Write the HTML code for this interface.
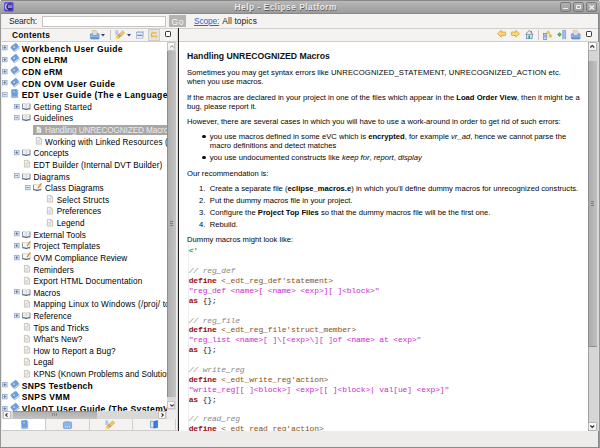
<!DOCTYPE html><html><head><meta charset="utf-8"><style>
*{margin:0;padding:0;box-sizing:border-box}
html,body{width:600px;height:448px;overflow:hidden;background:#edeceb}
body{position:relative;font-family:"Liberation Sans",sans-serif;color:#1c1c1c}
.a{position:absolute}
.t{position:absolute;white-space:nowrap;line-height:1}
svg{position:absolute;overflow:visible}
</style></head><body><div class="a" style="left:0;top:0;width:600px;height:14px;background:linear-gradient(#bababa,#b0b0b0 25%,#9c9c9c);border-top:1px solid #8a8a8a;border-bottom:1px solid #888"></div>
<div class="a" style="left:0;top:0;width:1.3px;height:1.3px;background:#fff"></div>
<div class="a" style="left:598.7px;top:0;width:1.3px;height:1.3px;background:#fff"></div>
<svg style="left:4px;top:2px" width="9.5" height="9.5" viewBox="0 0 10 10"><defs><linearGradient id="eg" x1="0" y1="0" x2="1" y2="1"><stop offset="0" stop-color="#6e5ee6"/><stop offset="1" stop-color="#4636b4"/></linearGradient></defs><rect x="0" y="0" width="10" height="10" rx="1.6" fill="url(#eg)"/><circle cx="5.4" cy="5" r="3.5" fill="#2c2a80"/><path d="M4.6 1.5A3.5 3.5 0 0 0 4.6 8.5A4.2 3.9 0 0 1 4.6 1.5Z" fill="#ecd4ec"/><path d="M4.2 3.4h4.4M4 4.6h4.9M4.2 5.8h4.5" stroke="#b4bcf0" stroke-width="0.75"/></svg>
<div class="t" style="left:234.6px;top:3.1px;font-size:8.3px;font-weight:bold;color:#ececec;letter-spacing:0.523px;text-shadow:0.4px 0.5px 0.6px #5a5a5a">Help - Eclipse Platform</div>
<div class="a" style="left:560.3px;top:2px;width:10.5px;height:10px;border:1px solid #7a7a7a;border-radius:2px;background:linear-gradient(#b0b0b0,#9c9c9c)"></div>
<div class="a" style="left:573px;top:2px;width:10.5px;height:10px;border:1px solid #7a7a7a;border-radius:2px;background:linear-gradient(#b0b0b0,#9c9c9c)"></div>
<div class="a" style="left:586.1px;top:2px;width:10.5px;height:10px;border:1px solid #7a7a7a;border-radius:2px;background:linear-gradient(#b0b0b0,#9c9c9c)"></div>
<div class="a" style="left:563px;top:7.6px;width:5.2px;height:1.4px;background:#f0f0f0"></div>
<div class="a" style="left:575.8px;top:4.8px;width:5.2px;height:4.2px;border:0.9px solid #f0f0f0;border-top-width:1.4px;border-radius:0.8px"></div>
<svg style="left:588.6px;top:4.5px" width="5.5" height="5" viewBox="0 0 5.5 5"><path d="M0.5 0.5L5 4.5M5 0.5L0.5 4.5" stroke="#f4f4f4" stroke-width="1.3"/></svg>
<div class="a" style="left:0;top:13px;width:1.3px;height:435px;background:linear-gradient(90deg,#a4a4a4,#8a8a8a)"></div>
<div class="a" style="left:598.3px;top:13px;width:1.7px;height:435px;background:linear-gradient(90deg,#8a8a8a 60%,#a8a8a8)"></div>
<div class="a" style="left:0;top:446.8px;width:600px;height:1.2px;background:#8a8a8a"></div>
<div class="a" style="left:1.5px;top:14px;width:596.5px;height:14px;background:#f4f3f2"></div>
<div class="t" style="left:9px;top:16.5px;font-size:8.4px;color:#222;letter-spacing:-0.141px">Search:</div>
<div class="a" style="left:42px;top:15.5px;width:123.5px;height:11px;background:#fff;border:1px solid #c6c4c2"></div>
<div class="a" style="left:169px;top:15px;width:16.5px;height:11.5px;background:#b5b3b1"></div>
<div class="t" style="left:171.6px;top:17.6px;font-size:8.6px;color:#f6f6f6;letter-spacing:0.45px">Go</div>
<div class="t" style="left:194px;top:16.5px;font-size:8.4px;color:#2f63d6;text-decoration:underline;letter-spacing:-0.156px">Scope:</div>
<div class="t" style="left:222.3px;top:16.5px;font-size:8.4px;color:#1a1a1a;letter-spacing:0.113px">All topics</div>
<div class="a" style="left:1.5px;top:28px;width:596.5px;height:1px;background:#d2d0ce"></div>
<div class="a" style="left:1.5px;top:29px;width:175px;height:12px;background:#f4f3f2"></div>
<div class="t" style="left:12px;top:31.3px;font-size:8.3px;font-weight:bold;color:#0a0a0a;letter-spacing:0.263px">Contents</div>
<div class="a" style="left:1.5px;top:41px;width:175px;height:1px;background:#d0cecc"></div>
<svg style="left:90px;top:30px" width="9.5" height="9.5" viewBox="0 0 9.5 9.5"><path d="M2.3 5.5V0.6H6L7.2 1.8V5.5z" fill="#d4e0f2" stroke="#d2b060" stroke-width="0.6"/><path d="M0.4 3.8H2.3V5.6H7.2V3.8H9.1V8.2Q9.1 9.1 8.2 9.1H1.3Q0.4 9.1 0.4 8.2z" fill="#94b8e6" stroke="#5a88cc" stroke-width="0.6"/><rect x="0.8" y="7.4" width="7.9" height="1.3" fill="#5a84c4"/></svg>
<svg style="left:101px;top:33.8px" width="4" height="3" viewBox="0 0 4 3"><path d="M0 0h4l-2 2.6z" fill="#2a3a7a"/></svg>
<div class="a" style="left:110.3px;top:30px;width:1px;height:9.5px;background:#c8c6c4"></div>
<svg style="left:115.2px;top:30px" width="10.0" height="9.5" viewBox="0 0 10 9.5"><rect x="0.3" y="0.3" width="3" height="4.6" fill="#b4c6e6"/><g transform="rotate(-42 5.2 5)"><rect x="1" y="3.6" width="9" height="2.9" rx="0.6" fill="#f2c454" stroke="#dc9a28" stroke-width="0.5"/><rect x="3.2" y="3.6" width="2" height="2.9" fill="#a8a0b8"/><rect x="7.2" y="4.2" width="1.6" height="1.6" fill="#c8d0a0"/></g><circle cx="1.4" cy="8.2" r="1.2" fill="#f8e860" opacity="0.9"/></svg>
<svg style="left:126.8px;top:33.8px" width="4" height="3" viewBox="0 0 4 3"><path d="M0 0h4l-2 2.6z" fill="#2a3a7a"/></svg>
<svg style="left:136px;top:31px" width="8" height="7.5" viewBox="0 0 8 7.5"><rect x="1.5" y="0.3" width="6.2" height="5.5" fill="#dfe8f4" stroke="#9ab0cc" stroke-width="0.5"/><rect x="0.3" y="1.5" width="6.5" height="5.7" fill="#e8f0fa" stroke="#8aa4c4" stroke-width="0.6"/><rect x="1.3" y="3.8" width="4.6" height="1" fill="#3a70b8"/></svg>
<div class="a" style="left:148.3px;top:29px;width:11.3px;height:11.6px;background:#e4e2e0;border:1px solid #cfcdcb"></div>
<svg style="left:149px;top:29.5px" width="10" height="10" viewBox="0 0 10 10"><g fill="none" stroke="#e6b23a" stroke-width="1.3" stroke-linecap="round"><path d="M2.6 1.6V6.4H7.2"/><path d="M2.6 2.9H7"/></g><path d="M2.6 0.4L3.9 1.9 2.6 3.3 1.3 1.9z" fill="#f4cc58"/><path d="M7.3 5.1L8.7 6.5 7.3 7.9 5.9 6.5z" fill="#f0c040"/><circle cx="2.4" cy="1.9" r="0.6" fill="#fff4c0"/></svg>
<div class="a" style="left:165px;top:31.2px;width:5.6px;height:6px;border:0.8px solid #3a3a3a;border-top-width:1.5px;border-radius:1.2px;background:#fafafa"></div>
<div class="a" style="left:176.5px;top:28px;width:1.5px;height:403px;background:#dcdad8"></div>
<div class="a" style="left:178px;top:28px;width:1px;height:403px;background:#1e1e1e"></div>
<div class="a" style="left:2px;top:42px;width:164.8px;height:368.5px;background:#fff;overflow:hidden" >
<svg style="left:0.00px;top:3.40px" width="5.5" height="5.5" viewBox="0 0 5.5 5.5"><rect x="0.4" y="0.4" width="4.7" height="4.4" fill="#e4eef8" stroke="#9aaecb" stroke-width="0.9"/><path d="M1.3 2.6H4.2" stroke="#6f86a6" stroke-width="0.9"/><path d="M2.75 1.2V4.0" stroke="#4f6890" stroke-width="0.9"/></svg>
<svg style="left:7.8999999999999995px;top:0.8px" width="10" height="9" viewBox="0 0 10 9"><g transform="rotate(-38 5 4.5)"><rect x="1.6" y="1.4" width="7" height="5.6" rx="1" fill="#6a9ee0" stroke="#5a8ad0" stroke-width="0.4"/><rect x="1.8" y="6.6" width="6.8" height="1.1" fill="#dde4ec"/><rect x="1.6" y="7.5" width="7" height="0.5" fill="#6a90c8"/><circle cx="4.6" cy="3.6" r="0.8" fill="#f4e8c0"/></g></svg>
<div class="t" style="left:19.80px;top:3px;font-size:8.5px;font-weight:bold;color:#000;letter-spacing:0.364px">Workbench User Guide</div>
<svg style="left:0.00px;top:15.02px" width="5.5" height="5.5" viewBox="0 0 5.5 5.5"><rect x="0.4" y="0.4" width="4.7" height="4.4" fill="#e4eef8" stroke="#9aaecb" stroke-width="0.9"/><path d="M1.3 2.6H4.2" stroke="#6f86a6" stroke-width="0.9"/><path d="M2.75 1.2V4.0" stroke="#4f6890" stroke-width="0.9"/></svg>
<svg style="left:7.8999999999999995px;top:12.42px" width="10" height="9" viewBox="0 0 10 9"><g transform="rotate(-38 5 4.5)"><rect x="1.6" y="1.4" width="7" height="5.6" rx="1" fill="#6a9ee0" stroke="#5a8ad0" stroke-width="0.4"/><rect x="1.8" y="6.6" width="6.8" height="1.1" fill="#dde4ec"/><rect x="1.6" y="7.5" width="7" height="0.5" fill="#6a90c8"/><circle cx="4.6" cy="3.6" r="0.8" fill="#f4e8c0"/></g></svg>
<div class="t" style="left:19.80px;top:14px;font-size:8.5px;font-weight:bold;color:#000;letter-spacing:0.247px">CDN eLRM</div>
<svg style="left:0.00px;top:26.64px" width="5.5" height="5.5" viewBox="0 0 5.5 5.5"><rect x="0.4" y="0.4" width="4.7" height="4.4" fill="#e4eef8" stroke="#9aaecb" stroke-width="0.9"/><path d="M1.3 2.6H4.2" stroke="#6f86a6" stroke-width="0.9"/><path d="M2.75 1.2V4.0" stroke="#4f6890" stroke-width="0.9"/></svg>
<svg style="left:7.8999999999999995px;top:24.04px" width="10" height="9" viewBox="0 0 10 9"><g transform="rotate(-38 5 4.5)"><rect x="1.6" y="1.4" width="7" height="5.6" rx="1" fill="#6a9ee0" stroke="#5a8ad0" stroke-width="0.4"/><rect x="1.8" y="6.6" width="6.8" height="1.1" fill="#dde4ec"/><rect x="1.6" y="7.5" width="7" height="0.5" fill="#6a90c8"/><circle cx="4.6" cy="3.6" r="0.8" fill="#f4e8c0"/></g></svg>
<div class="t" style="left:19.80px;top:26px;font-size:8.5px;font-weight:bold;color:#000;letter-spacing:0.322px">CDN eRM</div>
<svg style="left:0.00px;top:38.26px" width="5.5" height="5.5" viewBox="0 0 5.5 5.5"><rect x="0.4" y="0.4" width="4.7" height="4.4" fill="#e4eef8" stroke="#9aaecb" stroke-width="0.9"/><path d="M1.3 2.6H4.2" stroke="#6f86a6" stroke-width="0.9"/><path d="M2.75 1.2V4.0" stroke="#4f6890" stroke-width="0.9"/></svg>
<svg style="left:7.8999999999999995px;top:35.66px" width="10" height="9" viewBox="0 0 10 9"><g transform="rotate(-38 5 4.5)"><rect x="1.6" y="1.4" width="7" height="5.6" rx="1" fill="#6a9ee0" stroke="#5a8ad0" stroke-width="0.4"/><rect x="1.8" y="6.6" width="6.8" height="1.1" fill="#dde4ec"/><rect x="1.6" y="7.5" width="7" height="0.5" fill="#6a90c8"/><circle cx="4.6" cy="3.6" r="0.8" fill="#f4e8c0"/></g></svg>
<div class="t" style="left:19.80px;top:38px;font-size:8.5px;font-weight:bold;color:#000;letter-spacing:0.307px">CDN OVM User Guide</div>
<svg style="left:0.00px;top:49.88px" width="5.5" height="5.5" viewBox="0 0 5.5 5.5"><rect x="0.4" y="0.4" width="4.7" height="4.4" fill="#e4eef8" stroke="#9aaecb" stroke-width="0.9"/><path d="M1.3 2.6H4.2" stroke="#6f86a6" stroke-width="0.9"/></svg>
<svg style="left:9.0px;top:47.48px" width="8" height="9" viewBox="0 0 8 9"><path d="M0.5 0.8L5.5 0.3 6.6 1.6 6.6 8.5 0.8 8.7z" fill="#6aa0e2" stroke="#4a78b8" stroke-width="0.4"/><path d="M5.5 0.3L6.6 1.6 6.6 8.5 7.2 8.2 7.2 1z" fill="#c8c0a0"/><rect x="1" y="7.6" width="5.6" height="1" fill="#c0c8d0"/><circle cx="3" cy="2.8" r="0.7" fill="#e8e0c0"/></svg>
<div class="t" style="left:19.80px;top:49px;font-size:8.5px;font-weight:bold;color:#000;letter-spacing:0.378px">EDT User Guide (The e Language Reference)</div>
<svg style="left:11.63px;top:61.50px" width="5.5" height="5.5" viewBox="0 0 5.5 5.5"><rect x="0.4" y="0.4" width="4.7" height="4.4" fill="#e4eef8" stroke="#9aaecb" stroke-width="0.9"/><path d="M1.3 2.6H4.2" stroke="#6f86a6" stroke-width="0.9"/><path d="M2.75 1.2V4.0" stroke="#4f6890" stroke-width="0.9"/></svg>
<svg style="left:19.63px;top:60.8px" width="8.5" height="7" viewBox="0 0 8.5 7"><path d="M0.4 0.6Q2.2 0.2 4.25 1.1Q6.3 0.2 8.1 0.6V5.8Q6.3 5.3 4.25 6.3Q2.2 5.3 0.4 5.8z" fill="#f4f6fa" stroke="#b8ac80" stroke-width="0.5"/><path d="M0.4 5.9Q2.2 5.4 4.25 6.5Q6.3 5.4 8.1 5.9" fill="none" stroke="#46587a" stroke-width="1.1"/><path d="M0.5 1V5.6M8 1V5.6" stroke="#6a7a90" stroke-width="0.7"/><path d="M4.25 1.2V6.2" stroke="#a0a8b8" stroke-width="0.5"/><path d="M1.5 2.2h1.8M1.5 3.4h1.8M5.2 2.2h1.8M5.2 3.4h1.8" stroke="#c8d4e8" stroke-width="0.5"/></svg>
<div class="t" style="left:31.43px;top:62px;font-size:8.2px;color:#000;letter-spacing:0.240px">Getting Started</div>
<svg style="left:11.63px;top:73.12px" width="5.5" height="5.5" viewBox="0 0 5.5 5.5"><rect x="0.4" y="0.4" width="4.7" height="4.4" fill="#e4eef8" stroke="#9aaecb" stroke-width="0.9"/><path d="M1.3 2.6H4.2" stroke="#6f86a6" stroke-width="0.9"/></svg>
<svg style="left:19.63px;top:72.42px" width="8.5" height="7" viewBox="0 0 8.5 7"><path d="M0.4 0.6Q2.2 0.2 4.25 1.1Q6.3 0.2 8.1 0.6V5.8Q6.3 5.3 4.25 6.3Q2.2 5.3 0.4 5.8z" fill="#f4f6fa" stroke="#b8ac80" stroke-width="0.5"/><path d="M0.4 5.9Q2.2 5.4 4.25 6.5Q6.3 5.4 8.1 5.9" fill="none" stroke="#46587a" stroke-width="1.1"/><path d="M0.5 1V5.6M8 1V5.6" stroke="#6a7a90" stroke-width="0.7"/><path d="M4.25 1.2V6.2" stroke="#a0a8b8" stroke-width="0.5"/><path d="M1.5 2.2h1.8M1.5 3.4h1.8M5.2 2.2h1.8M5.2 3.4h1.8" stroke="#c8d4e8" stroke-width="0.5"/></svg>
<div class="t" style="left:31.43px;top:73px;font-size:8.2px;color:#000;letter-spacing:0.120px">Guidelines</div>
<div class="a" style="left:31.46px;top:82.94px;width:140px;height:10px;background:#a9a7a5"></div>
<svg style="left:33.56px;top:83.53999999999999px" width="6" height="7.5" viewBox="0 0 6 7.5"><path d="M0.4 0.4H3.8L5.6 2.2V7.1H0.4z" fill="#f2f4f8" stroke="#b4a47c" stroke-width="0.6"/><path d="M3.8 0.4V2.2H5.6" fill="none" stroke="#b4a47c" stroke-width="0.5"/><path d="M1.4 3.5h2.8M1.4 4.7h2.8M1.4 5.9h2.2" stroke="#b8c4dc" stroke-width="0.6"/></svg>
<div class="t" style="left:43.06px;top:85px;font-size:8.2px;color:#ebebeb;letter-spacing:-0.107px">Handling UNRECOGNIZED Macros</div>
<svg style="left:33.56px;top:95.16px" width="6" height="7.5" viewBox="0 0 6 7.5"><path d="M0.4 0.4H3.8L5.6 2.2V7.1H0.4z" fill="#f2f4f8" stroke="#b4a47c" stroke-width="0.6"/><path d="M3.8 0.4V2.2H5.6" fill="none" stroke="#b4a47c" stroke-width="0.5"/><path d="M1.4 3.5h2.8M1.4 4.7h2.8M1.4 5.9h2.2" stroke="#b8c4dc" stroke-width="0.6"/></svg>
<div class="t" style="left:43.06px;top:97px;font-size:8.2px;color:#000;letter-spacing:0.105px">Working with Linked Resources (</div>
<svg style="left:11.63px;top:107.98px" width="5.5" height="5.5" viewBox="0 0 5.5 5.5"><rect x="0.4" y="0.4" width="4.7" height="4.4" fill="#e4eef8" stroke="#9aaecb" stroke-width="0.9"/><path d="M1.3 2.6H4.2" stroke="#6f86a6" stroke-width="0.9"/><path d="M2.75 1.2V4.0" stroke="#4f6890" stroke-width="0.9"/></svg>
<svg style="left:19.63px;top:107.28px" width="8.5" height="7" viewBox="0 0 8.5 7"><path d="M0.4 0.6Q2.2 0.2 4.25 1.1Q6.3 0.2 8.1 0.6V5.8Q6.3 5.3 4.25 6.3Q2.2 5.3 0.4 5.8z" fill="#f4f6fa" stroke="#b8ac80" stroke-width="0.5"/><path d="M0.4 5.9Q2.2 5.4 4.25 6.5Q6.3 5.4 8.1 5.9" fill="none" stroke="#46587a" stroke-width="1.1"/><path d="M0.5 1V5.6M8 1V5.6" stroke="#6a7a90" stroke-width="0.7"/><path d="M4.25 1.2V6.2" stroke="#a0a8b8" stroke-width="0.5"/><path d="M1.5 2.2h1.8M1.5 3.4h1.8M5.2 2.2h1.8M5.2 3.4h1.8" stroke="#c8d4e8" stroke-width="0.5"/></svg>
<div class="t" style="left:31.43px;top:108px;font-size:8.2px;color:#000;letter-spacing:0.086px">Concepts</div>
<svg style="left:21.93px;top:118.39999999999999px" width="6" height="7.5" viewBox="0 0 6 7.5"><path d="M0.4 0.4H3.8L5.6 2.2V7.1H0.4z" fill="#f2f4f8" stroke="#b4a47c" stroke-width="0.6"/><path d="M3.8 0.4V2.2H5.6" fill="none" stroke="#b4a47c" stroke-width="0.5"/><path d="M1.4 3.5h2.8M1.4 4.7h2.8M1.4 5.9h2.2" stroke="#b8c4dc" stroke-width="0.6"/></svg>
<div class="t" style="left:31.43px;top:120px;font-size:8.2px;color:#000;letter-spacing:0.106px">EDT Builder (Internal DVT Builder)</div>
<svg style="left:11.63px;top:131.22px" width="5.5" height="5.5" viewBox="0 0 5.5 5.5"><rect x="0.4" y="0.4" width="4.7" height="4.4" fill="#e4eef8" stroke="#9aaecb" stroke-width="0.9"/><path d="M1.3 2.6H4.2" stroke="#6f86a6" stroke-width="0.9"/></svg>
<svg style="left:19.63px;top:130.51999999999998px" width="8.5" height="7" viewBox="0 0 8.5 7"><path d="M0.4 0.6Q2.2 0.2 4.25 1.1Q6.3 0.2 8.1 0.6V5.8Q6.3 5.3 4.25 6.3Q2.2 5.3 0.4 5.8z" fill="#f4f6fa" stroke="#b8ac80" stroke-width="0.5"/><path d="M0.4 5.9Q2.2 5.4 4.25 6.5Q6.3 5.4 8.1 5.9" fill="none" stroke="#46587a" stroke-width="1.1"/><path d="M0.5 1V5.6M8 1V5.6" stroke="#6a7a90" stroke-width="0.7"/><path d="M4.25 1.2V6.2" stroke="#a0a8b8" stroke-width="0.5"/><path d="M1.5 2.2h1.8M1.5 3.4h1.8M5.2 2.2h1.8M5.2 3.4h1.8" stroke="#c8d4e8" stroke-width="0.5"/></svg>
<div class="t" style="left:31.43px;top:132px;font-size:8.2px;color:#000;letter-spacing:0.193px">Diagrams</div>
<svg style="left:23.26px;top:142.84px" width="5.5" height="5.5" viewBox="0 0 5.5 5.5"><rect x="0.4" y="0.4" width="4.7" height="4.4" fill="#e4eef8" stroke="#9aaecb" stroke-width="0.9"/><path d="M1.3 2.6H4.2" stroke="#6f86a6" stroke-width="0.9"/></svg>
<svg style="left:31.26px;top:140.64px" width="9" height="8" viewBox="0 0 9 8"><path d="M0.4 1.6Q2.2 1.2 4.25 2.1Q6.3 1.2 8.1 1.6V6.8Q6.3 6.3 4.25 7.3Q2.2 6.3 0.4 6.8z" fill="#f4f6fa" stroke="#b8ac80" stroke-width="0.5"/><path d="M0.4 6.9Q2.2 6.4 4.25 7.5Q6.3 6.4 8.1 6.9" fill="none" stroke="#46587a" stroke-width="1.1"/><path d="M0.5 2V6.6" stroke="#6a7a90" stroke-width="0.7"/><path d="M5 5.2L8.4 0.4" stroke="#e08a30" stroke-width="1.3"/></svg>
<div class="t" style="left:43.06px;top:143px;font-size:8.2px;color:#000;letter-spacing:0.068px">Class Diagrams</div>
<svg style="left:45.19px;top:153.26px" width="6" height="7.5" viewBox="0 0 6 7.5"><path d="M0.4 0.4H3.8L5.6 2.2V7.1H0.4z" fill="#f2f4f8" stroke="#b4a47c" stroke-width="0.6"/><path d="M3.8 0.4V2.2H5.6" fill="none" stroke="#b4a47c" stroke-width="0.5"/><path d="M1.4 3.5h2.8M1.4 4.7h2.8M1.4 5.9h2.2" stroke="#b8c4dc" stroke-width="0.6"/></svg>
<div class="t" style="left:54.69px;top:155px;font-size:8.2px;color:#000;letter-spacing:0.148px">Select Structs</div>
<svg style="left:45.19px;top:164.87999999999997px" width="6" height="7.5" viewBox="0 0 6 7.5"><path d="M0.4 0.4H3.8L5.6 2.2V7.1H0.4z" fill="#f2f4f8" stroke="#b4a47c" stroke-width="0.6"/><path d="M3.8 0.4V2.2H5.6" fill="none" stroke="#b4a47c" stroke-width="0.5"/><path d="M1.4 3.5h2.8M1.4 4.7h2.8M1.4 5.9h2.2" stroke="#b8c4dc" stroke-width="0.6"/></svg>
<div class="t" style="left:54.69px;top:166px;font-size:8.2px;color:#000;letter-spacing:0.030px">Preferences</div>
<svg style="left:45.19px;top:176.49999999999997px" width="6" height="7.5" viewBox="0 0 6 7.5"><path d="M0.4 0.4H3.8L5.6 2.2V7.1H0.4z" fill="#f2f4f8" stroke="#b4a47c" stroke-width="0.6"/><path d="M3.8 0.4V2.2H5.6" fill="none" stroke="#b4a47c" stroke-width="0.5"/><path d="M1.4 3.5h2.8M1.4 4.7h2.8M1.4 5.9h2.2" stroke="#b8c4dc" stroke-width="0.6"/></svg>
<div class="t" style="left:54.69px;top:178px;font-size:8.2px;color:#000;letter-spacing:0.087px">Legend</div>
<svg style="left:11.63px;top:189.32px" width="5.5" height="5.5" viewBox="0 0 5.5 5.5"><rect x="0.4" y="0.4" width="4.7" height="4.4" fill="#e4eef8" stroke="#9aaecb" stroke-width="0.9"/><path d="M1.3 2.6H4.2" stroke="#6f86a6" stroke-width="0.9"/><path d="M2.75 1.2V4.0" stroke="#4f6890" stroke-width="0.9"/></svg>
<svg style="left:19.63px;top:188.61999999999998px" width="8.5" height="7" viewBox="0 0 8.5 7"><path d="M0.4 0.6Q2.2 0.2 4.25 1.1Q6.3 0.2 8.1 0.6V5.8Q6.3 5.3 4.25 6.3Q2.2 5.3 0.4 5.8z" fill="#f4f6fa" stroke="#b8ac80" stroke-width="0.5"/><path d="M0.4 5.9Q2.2 5.4 4.25 6.5Q6.3 5.4 8.1 5.9" fill="none" stroke="#46587a" stroke-width="1.1"/><path d="M0.5 1V5.6M8 1V5.6" stroke="#6a7a90" stroke-width="0.7"/><path d="M4.25 1.2V6.2" stroke="#a0a8b8" stroke-width="0.5"/><path d="M1.5 2.2h1.8M1.5 3.4h1.8M5.2 2.2h1.8M5.2 3.4h1.8" stroke="#c8d4e8" stroke-width="0.5"/></svg>
<div class="t" style="left:31.43px;top:190px;font-size:8.2px;color:#000;letter-spacing:0.085px">External Tools</div>
<svg style="left:11.63px;top:200.94px" width="5.5" height="5.5" viewBox="0 0 5.5 5.5"><rect x="0.4" y="0.4" width="4.7" height="4.4" fill="#e4eef8" stroke="#9aaecb" stroke-width="0.9"/><path d="M1.3 2.6H4.2" stroke="#6f86a6" stroke-width="0.9"/><path d="M2.75 1.2V4.0" stroke="#4f6890" stroke-width="0.9"/></svg>
<svg style="left:19.63px;top:198.73999999999998px" width="9" height="8" viewBox="0 0 9 8"><path d="M0.4 1.6Q2.2 1.2 4.25 2.1Q6.3 1.2 8.1 1.6V6.8Q6.3 6.3 4.25 7.3Q2.2 6.3 0.4 6.8z" fill="#f4f6fa" stroke="#b8ac80" stroke-width="0.5"/><path d="M0.4 6.9Q2.2 6.4 4.25 7.5Q6.3 6.4 8.1 6.9" fill="none" stroke="#46587a" stroke-width="1.1"/><path d="M0.5 2V6.6" stroke="#6a7a90" stroke-width="0.7"/><path d="M5 5.2L8.4 0.4" stroke="#e08a30" stroke-width="1.3"/></svg>
<div class="t" style="left:31.43px;top:201px;font-size:8.2px;color:#000;letter-spacing:0.110px">Project Templates</div>
<svg style="left:11.63px;top:212.56px" width="5.5" height="5.5" viewBox="0 0 5.5 5.5"><rect x="0.4" y="0.4" width="4.7" height="4.4" fill="#e4eef8" stroke="#9aaecb" stroke-width="0.9"/><path d="M1.3 2.6H4.2" stroke="#6f86a6" stroke-width="0.9"/><path d="M2.75 1.2V4.0" stroke="#4f6890" stroke-width="0.9"/></svg>
<svg style="left:19.63px;top:210.35999999999999px" width="9" height="8" viewBox="0 0 9 8"><path d="M0.4 1.6Q2.2 1.2 4.25 2.1Q6.3 1.2 8.1 1.6V6.8Q6.3 6.3 4.25 7.3Q2.2 6.3 0.4 6.8z" fill="#f4f6fa" stroke="#b8ac80" stroke-width="0.5"/><path d="M0.4 6.9Q2.2 6.4 4.25 7.5Q6.3 6.4 8.1 6.9" fill="none" stroke="#46587a" stroke-width="1.1"/><path d="M0.5 2V6.6" stroke="#6a7a90" stroke-width="0.7"/><path d="M5 5.2L8.4 0.4" stroke="#e08a30" stroke-width="1.3"/></svg>
<div class="t" style="left:31.43px;top:213px;font-size:8.2px;color:#000;letter-spacing:0.024px">OVM Compliance Review</div>
<svg style="left:21.93px;top:222.97999999999996px" width="6" height="7.5" viewBox="0 0 6 7.5"><path d="M0.4 0.4H3.8L5.6 2.2V7.1H0.4z" fill="#f2f4f8" stroke="#b4a47c" stroke-width="0.6"/><path d="M3.8 0.4V2.2H5.6" fill="none" stroke="#b4a47c" stroke-width="0.5"/><path d="M1.4 3.5h2.8M1.4 4.7h2.8M1.4 5.9h2.2" stroke="#b8c4dc" stroke-width="0.6"/></svg>
<div class="t" style="left:31.43px;top:225px;font-size:8.2px;color:#000;letter-spacing:0.089px">Reminders</div>
<svg style="left:21.93px;top:234.59999999999997px" width="6" height="7.5" viewBox="0 0 6 7.5"><path d="M0.4 0.4H3.8L5.6 2.2V7.1H0.4z" fill="#f2f4f8" stroke="#b4a47c" stroke-width="0.6"/><path d="M3.8 0.4V2.2H5.6" fill="none" stroke="#b4a47c" stroke-width="0.5"/><path d="M1.4 3.5h2.8M1.4 4.7h2.8M1.4 5.9h2.2" stroke="#b8c4dc" stroke-width="0.6"/></svg>
<div class="t" style="left:31.43px;top:236px;font-size:8.2px;color:#000;letter-spacing:0.149px">Export HTML Documentation</div>
<svg style="left:11.63px;top:247.42px" width="5.5" height="5.5" viewBox="0 0 5.5 5.5"><rect x="0.4" y="0.4" width="4.7" height="4.4" fill="#e4eef8" stroke="#9aaecb" stroke-width="0.9"/><path d="M1.3 2.6H4.2" stroke="#6f86a6" stroke-width="0.9"/><path d="M2.75 1.2V4.0" stroke="#4f6890" stroke-width="0.9"/></svg>
<svg style="left:19.63px;top:246.71999999999997px" width="8.5" height="7" viewBox="0 0 8.5 7"><path d="M0.4 0.6Q2.2 0.2 4.25 1.1Q6.3 0.2 8.1 0.6V5.8Q6.3 5.3 4.25 6.3Q2.2 5.3 0.4 5.8z" fill="#f4f6fa" stroke="#b8ac80" stroke-width="0.5"/><path d="M0.4 5.9Q2.2 5.4 4.25 6.5Q6.3 5.4 8.1 5.9" fill="none" stroke="#46587a" stroke-width="1.1"/><path d="M0.5 1V5.6M8 1V5.6" stroke="#6a7a90" stroke-width="0.7"/><path d="M4.25 1.2V6.2" stroke="#a0a8b8" stroke-width="0.5"/><path d="M1.5 2.2h1.8M1.5 3.4h1.8M5.2 2.2h1.8M5.2 3.4h1.8" stroke="#c8d4e8" stroke-width="0.5"/></svg>
<div class="t" style="left:31.43px;top:248px;font-size:8.2px;color:#000;letter-spacing:-0.007px">Macros</div>
<svg style="left:21.93px;top:257.84px" width="6" height="7.5" viewBox="0 0 6 7.5"><path d="M0.4 0.4H3.8L5.6 2.2V7.1H0.4z" fill="#f2f4f8" stroke="#b4a47c" stroke-width="0.6"/><path d="M3.8 0.4V2.2H5.6" fill="none" stroke="#b4a47c" stroke-width="0.5"/><path d="M1.4 3.5h2.8M1.4 4.7h2.8M1.4 5.9h2.2" stroke="#b8c4dc" stroke-width="0.6"/></svg>
<div class="t" style="left:31.43px;top:259px;font-size:8.2px;color:#000;letter-spacing:0.179px">Mapping Linux to Windows (/proj/ to</div>
<svg style="left:11.63px;top:270.66px" width="5.5" height="5.5" viewBox="0 0 5.5 5.5"><rect x="0.4" y="0.4" width="4.7" height="4.4" fill="#e4eef8" stroke="#9aaecb" stroke-width="0.9"/><path d="M1.3 2.6H4.2" stroke="#6f86a6" stroke-width="0.9"/><path d="M2.75 1.2V4.0" stroke="#4f6890" stroke-width="0.9"/></svg>
<svg style="left:19.63px;top:269.96px" width="8.5" height="7" viewBox="0 0 8.5 7"><path d="M0.4 0.6Q2.2 0.2 4.25 1.1Q6.3 0.2 8.1 0.6V5.8Q6.3 5.3 4.25 6.3Q2.2 5.3 0.4 5.8z" fill="#f4f6fa" stroke="#b8ac80" stroke-width="0.5"/><path d="M0.4 5.9Q2.2 5.4 4.25 6.5Q6.3 5.4 8.1 5.9" fill="none" stroke="#46587a" stroke-width="1.1"/><path d="M0.5 1V5.6M8 1V5.6" stroke="#6a7a90" stroke-width="0.7"/><path d="M4.25 1.2V6.2" stroke="#a0a8b8" stroke-width="0.5"/><path d="M1.5 2.2h1.8M1.5 3.4h1.8M5.2 2.2h1.8M5.2 3.4h1.8" stroke="#c8d4e8" stroke-width="0.5"/></svg>
<div class="t" style="left:31.43px;top:271px;font-size:8.2px;color:#000;letter-spacing:0.035px">Reference</div>
<svg style="left:21.93px;top:281.08px" width="6" height="7.5" viewBox="0 0 6 7.5"><path d="M0.4 0.4H3.8L5.6 2.2V7.1H0.4z" fill="#f2f4f8" stroke="#b4a47c" stroke-width="0.6"/><path d="M3.8 0.4V2.2H5.6" fill="none" stroke="#b4a47c" stroke-width="0.5"/><path d="M1.4 3.5h2.8M1.4 4.7h2.8M1.4 5.9h2.2" stroke="#b8c4dc" stroke-width="0.6"/></svg>
<div class="t" style="left:31.43px;top:283px;font-size:8.2px;color:#000;letter-spacing:0.048px">Tips and Tricks</div>
<svg style="left:21.93px;top:292.7px" width="6" height="7.5" viewBox="0 0 6 7.5"><path d="M0.4 0.4H3.8L5.6 2.2V7.1H0.4z" fill="#f2f4f8" stroke="#b4a47c" stroke-width="0.6"/><path d="M3.8 0.4V2.2H5.6" fill="none" stroke="#b4a47c" stroke-width="0.5"/><path d="M1.4 3.5h2.8M1.4 4.7h2.8M1.4 5.9h2.2" stroke="#b8c4dc" stroke-width="0.6"/></svg>
<div class="t" style="left:31.43px;top:294px;font-size:8.2px;color:#000;letter-spacing:0.080px">What&#x27;s New?</div>
<svg style="left:21.93px;top:304.32px" width="6" height="7.5" viewBox="0 0 6 7.5"><path d="M0.4 0.4H3.8L5.6 2.2V7.1H0.4z" fill="#f2f4f8" stroke="#b4a47c" stroke-width="0.6"/><path d="M3.8 0.4V2.2H5.6" fill="none" stroke="#b4a47c" stroke-width="0.5"/><path d="M1.4 3.5h2.8M1.4 4.7h2.8M1.4 5.9h2.2" stroke="#b8c4dc" stroke-width="0.6"/></svg>
<div class="t" style="left:31.43px;top:306px;font-size:8.2px;color:#000;letter-spacing:0.084px">How to Report a Bug?</div>
<svg style="left:21.93px;top:315.93999999999994px" width="6" height="7.5" viewBox="0 0 6 7.5"><path d="M0.4 0.4H3.8L5.6 2.2V7.1H0.4z" fill="#f2f4f8" stroke="#b4a47c" stroke-width="0.6"/><path d="M3.8 0.4V2.2H5.6" fill="none" stroke="#b4a47c" stroke-width="0.5"/><path d="M1.4 3.5h2.8M1.4 4.7h2.8M1.4 5.9h2.2" stroke="#b8c4dc" stroke-width="0.6"/></svg>
<div class="t" style="left:31.43px;top:317px;font-size:8.2px;color:#000;letter-spacing:0.055px">Legal</div>
<svg style="left:21.93px;top:327.55999999999995px" width="6" height="7.5" viewBox="0 0 6 7.5"><path d="M0.4 0.4H3.8L5.6 2.2V7.1H0.4z" fill="#f2f4f8" stroke="#b4a47c" stroke-width="0.6"/><path d="M3.8 0.4V2.2H5.6" fill="none" stroke="#b4a47c" stroke-width="0.5"/><path d="M1.4 3.5h2.8M1.4 4.7h2.8M1.4 5.9h2.2" stroke="#b8c4dc" stroke-width="0.6"/></svg>
<div class="t" style="left:31.43px;top:329px;font-size:8.2px;color:#000;letter-spacing:0.023px">KPNS (Known Problems and Solutions)</div>
<svg style="left:0.00px;top:340.38px" width="5.5" height="5.5" viewBox="0 0 5.5 5.5"><rect x="0.4" y="0.4" width="4.7" height="4.4" fill="#e4eef8" stroke="#9aaecb" stroke-width="0.9"/><path d="M1.3 2.6H4.2" stroke="#6f86a6" stroke-width="0.9"/><path d="M2.75 1.2V4.0" stroke="#4f6890" stroke-width="0.9"/></svg>
<svg style="left:7.8999999999999995px;top:337.78px" width="10" height="9" viewBox="0 0 10 9"><g transform="rotate(-38 5 4.5)"><rect x="1.6" y="1.4" width="7" height="5.6" rx="1" fill="#6a9ee0" stroke="#5a8ad0" stroke-width="0.4"/><rect x="1.8" y="6.6" width="6.8" height="1.1" fill="#dde4ec"/><rect x="1.6" y="7.5" width="7" height="0.5" fill="#6a90c8"/><circle cx="4.6" cy="3.6" r="0.8" fill="#f4e8c0"/></g></svg>
<div class="t" style="left:19.80px;top:340px;font-size:8.5px;font-weight:bold;color:#000;letter-spacing:0.279px">SNPS Testbench</div>
<svg style="left:0.00px;top:352.00px" width="5.5" height="5.5" viewBox="0 0 5.5 5.5"><rect x="0.4" y="0.4" width="4.7" height="4.4" fill="#e4eef8" stroke="#9aaecb" stroke-width="0.9"/><path d="M1.3 2.6H4.2" stroke="#6f86a6" stroke-width="0.9"/><path d="M2.75 1.2V4.0" stroke="#4f6890" stroke-width="0.9"/></svg>
<svg style="left:7.8999999999999995px;top:349.4px" width="10" height="9" viewBox="0 0 10 9"><g transform="rotate(-38 5 4.5)"><rect x="1.6" y="1.4" width="7" height="5.6" rx="1" fill="#6a9ee0" stroke="#5a8ad0" stroke-width="0.4"/><rect x="1.8" y="6.6" width="6.8" height="1.1" fill="#dde4ec"/><rect x="1.6" y="7.5" width="7" height="0.5" fill="#6a90c8"/><circle cx="4.6" cy="3.6" r="0.8" fill="#f4e8c0"/></g></svg>
<div class="t" style="left:19.80px;top:351px;font-size:8.5px;font-weight:bold;color:#000;letter-spacing:0.372px">SNPS VMM</div>
<svg style="left:0.00px;top:363.62px" width="5.5" height="5.5" viewBox="0 0 5.5 5.5"><rect x="0.4" y="0.4" width="4.7" height="4.4" fill="#e4eef8" stroke="#9aaecb" stroke-width="0.9"/><path d="M1.3 2.6H4.2" stroke="#6f86a6" stroke-width="0.9"/><path d="M2.75 1.2V4.0" stroke="#4f6890" stroke-width="0.9"/></svg>
<svg style="left:7.8999999999999995px;top:361.02px" width="10" height="9" viewBox="0 0 10 9"><g transform="rotate(-38 5 4.5)"><rect x="1.6" y="1.4" width="7" height="5.6" rx="1" fill="#6a9ee0" stroke="#5a8ad0" stroke-width="0.4"/><rect x="1.8" y="6.6" width="6.8" height="1.1" fill="#dde4ec"/><rect x="1.6" y="7.5" width="7" height="0.5" fill="#6a90c8"/><circle cx="4.6" cy="3.6" r="0.8" fill="#f4e8c0"/></g></svg>
<div class="t" style="left:19.80px;top:363px;font-size:8.5px;font-weight:bold;color:#000;letter-spacing:0.376px">VlogDT User Guide (The SystemVerilog</div>
</div>
<div class="a" style="left:166.8px;top:42px;width:9.7px;height:368.5px;background:#d8d8d6"></div>
<div class="a" style="left:166.8px;top:51px;width:9.7px;height:346px;background:linear-gradient(90deg,#b0b0b0,#b9b9b9 50%,#c4c4c4);border-left:0.9px solid #8e8e8e"></div>
<div class="a" style="left:167.2px;top:42px;width:8.2px;height:9px;background:linear-gradient(#fbfbfb,#ececec);border:1px solid #c2c2c2;border-radius:1.2px"></div>
<svg style="left:169.5px;top:45px" width="4" height="3" viewBox="0 0 4 3"><path d="M0.3 2.5L2 0.7 3.7 2.5" fill="none" stroke="#8a8a8a" stroke-width="1"/></svg>
<div class="a" style="left:167.2px;top:401.3px;width:8.2px;height:8px;background:linear-gradient(#fbfbfb,#ececec);border:1px solid #c2c2c2;border-radius:1px"></div>
<svg style="left:169.5px;top:404.2px" width="4" height="3" viewBox="0 0 4 3"><path d="M0.3 0.5L2 2.3 3.7 0.5" fill="none" stroke="#404040" stroke-width="1.1"/></svg>
<div class="a" style="left:170px;top:221px;width:3.2px;height:5px;background:repeating-linear-gradient(#7e7e7e 0 0.9px,transparent 0.9px 2px)"></div>
<div class="a" style="left:2px;top:410.5px;width:165px;height:8px;background:#d8d8d6"></div>
<div class="a" style="left:12.5px;top:410.5px;width:84.2px;height:8px;background:linear-gradient(#b0b0b0,#b9b9b9 50%,#c4c4c4);border-top:0.9px solid #8e8e8e"></div>
<div class="a" style="left:2.5px;top:410.5px;width:8px;height:8px;background:#f6f6f6;border:1px solid #c0bebc;border-radius:1px"></div>
<svg style="left:5px;top:412.5px" width="3" height="4" viewBox="0 0 3 4"><path d="M2.5 0.3L0.7 2 2.5 3.7" fill="none" stroke="#303030" stroke-width="1.1"/></svg>
<div class="a" style="left:158.3px;top:410.5px;width:8px;height:8px;background:#f6f6f6;border:1px solid #c0bebc;border-radius:1px"></div>
<svg style="left:161px;top:412.5px" width="3" height="4" viewBox="0 0 3 4"><path d="M0.5 0.3L2.3 2 0.5 3.7" fill="none" stroke="#303030" stroke-width="1.1"/></svg>
<div class="a" style="left:52px;top:413px;width:5px;height:3px;border-left:1px solid #888;border-right:1px solid #888"></div>
<div class="a" style="left:54.2px;top:413px;width:0.8px;height:3px;background:#888"></div>
<div class="a" style="left:166.5px;top:410px;width:10px;height:8.5px;background:#edeceb"></div>
<div class="a" style="left:591px;top:0;width:0;height:0"></div>
<div class="a" style="left:1.5px;top:418.5px;width:175px;height:12px;background:#f4f3f2;border-bottom:1px solid #cfcdcb"></div>
<div class="a" style="left:2px;top:418.5px;width:43.5px;height:12px;background:#fff;border-right:1px solid #cfcdcb;border-bottom:1px solid #cfcdcb"></div>
<div class="a" style="left:89px;top:418.5px;width:1px;height:12px;background:#d0cecc"></div>
<div class="a" style="left:132px;top:418.5px;width:1px;height:12px;background:#d0cecc"></div>
<div class="a" style="left:175.2px;top:418.5px;width:1px;height:12px;background:#d0cecc"></div>
<svg style="left:20.8px;top:419.6px" width="8" height="9" viewBox="0 0 8 9"><path d="M0.5 0.8L5.5 0.3 6.6 1.6 6.6 8.5 0.8 8.7z" fill="#6aa0e2" stroke="#4a78b8" stroke-width="0.4"/><path d="M5.5 0.3L6.6 1.6 6.6 8.5 7.2 8.2 7.2 1z" fill="#c8c0a0"/><rect x="1" y="7.6" width="5.6" height="1" fill="#c0c8d0"/><circle cx="3" cy="2.8" r="0.7" fill="#e8e0c0"/></svg>
<svg style="left:63.3px;top:420.6px" width="9" height="8" viewBox="0 0 9 8"><rect x="0.4" y="1" width="8.2" height="6.6" rx="1.2" fill="#8cb6ea" stroke="#5a88c8" stroke-width="0.6"/><path d="M2.2 0.6h4.6" stroke="#b8d060" stroke-width="1"/><path d="M2.2 5.8h0.9M4.1 5.8h0.9M6 5.8h0.9" stroke="#f0f6ff" stroke-width="0.9"/></svg>
<svg style="left:105.3px;top:420px" width="10.0" height="9.5" viewBox="0 0 10 9.5"><rect x="0.3" y="0.3" width="3" height="4.6" fill="#b4c6e6"/><g transform="rotate(-42 5.2 5)"><rect x="1" y="3.6" width="9" height="2.9" rx="0.6" fill="#f2c454" stroke="#dc9a28" stroke-width="0.5"/><rect x="3.2" y="3.6" width="2" height="2.9" fill="#a8a0b8"/><rect x="7.2" y="4.2" width="1.6" height="1.6" fill="#c8d0a0"/></g><circle cx="1.4" cy="8.2" r="1.2" fill="#f8e860" opacity="0.9"/></svg>
<svg style="left:150px;top:420px" width="8.5" height="8.5" viewBox="0 0 8.5 8.5"><path d="M0.5 1L4 1.5V8L0.5 7.5z" fill="#d8e8f8" stroke="#4a7ab8" stroke-width="0.6"/><path d="M4 1.5L7.5 0.5V7.5L4 8z" fill="#3a80d8" stroke="#2a5aa8" stroke-width="0.6"/></svg>
<div class="a" style="left:179px;top:28.5px;width:419px;height:12.5px;background:#f4f3f2"></div>
<div class="a" style="left:179px;top:41px;width:419px;height:1px;background:#d0cecc"></div>
<svg style="left:497px;top:30.4px" width="9" height="7.5" viewBox="0 0 9 7.5"><g ><path d="M0.5 3.75L4.2 0.4V2.0H8.1Q8.6 2.0 8.6 2.5V5.0Q8.6 5.5 8.1 5.5H4.2V7.1z" fill="#f8d878" stroke="#d89a2a" stroke-width="0.75" stroke-linejoin="round"/></g></svg>
<svg style="left:510.5px;top:30.4px" width="9" height="7.5" viewBox="0 0 9 7.5"><g transform="translate(9,0) scale(-1,1)"><path d="M0.5 3.75L4.2 0.4V2.0H8.1Q8.6 2.0 8.6 2.5V5.0Q8.6 5.5 8.1 5.5H4.2V7.1z" fill="#f8d878" stroke="#d89a2a" stroke-width="0.75" stroke-linejoin="round"/></g></svg>
<svg style="left:525.3px;top:29.8px" width="8.5" height="9.2" viewBox="0 0 8.5 9.2"><path d="M0.3 4.5L4.25 0.4 8.2 4.5" fill="none" stroke="#b07040" stroke-width="0.9"/><rect x="1.3" y="4.2" width="5.9" height="4.6" fill="#cfe0f4" stroke="#4a7ab8" stroke-width="0.6"/><rect x="3.5" y="5.5" width="1.6" height="3.3" fill="#40a040"/><rect x="5.8" y="0.8" width="1" height="2.5" fill="#b07040"/></svg>
<div class="a" style="left:538.3px;top:30px;width:1px;height:9.5px;background:#c8c6c4"></div>
<svg style="left:542.8px;top:29.8px" width="10" height="10" viewBox="0 0 10 10"><rect x="0.4" y="3.4" width="3.4" height="5.9" fill="#c4d6ee" stroke="#4a78b8" stroke-width="0.6"/><path d="M1 5.3h2.2M1 6.8h2.2" stroke="#4a78b8" stroke-width="0.5"/><path d="M5.2 0.3L7.2 2.2 5.2 4.1 3.2 2.2z" fill="#ecc24a"/><path d="M7.4 3.9L9.5 5.9 7.4 7.9 5.3 5.9z" fill="#e8b840"/><path d="M5.6 3.2L7 4.6" stroke="#e0b040" stroke-width="1.2"/><circle cx="5" cy="2" r="0.6" fill="#fff0b0"/></svg>
<svg style="left:556.5px;top:30px" width="9.5" height="9.5" viewBox="0 0 9.5 9.5"><path d="M2.5 2.2L4.7 4.5 2.5 6.8 0.3 4.5z" fill="#3a9a3a"/><circle cx="2.5" cy="4.3" r="0.7" fill="#9ad070"/><path d="M5.7 0.3H8.7V9.2L7.2 7.9 5.7 9.2z" fill="#90b2e0" stroke="#6a90c8" stroke-width="0.5"/><path d="M7.2 0.8V7.5" stroke="#b8d0f0" stroke-width="0.7"/></svg>
<svg style="left:571px;top:30px" width="9.5" height="9.5" viewBox="0 0 9.5 9.5"><path d="M2.3 5.5V0.6H6L7.2 1.8V5.5z" fill="#d4e0f2" stroke="#d2b060" stroke-width="0.6"/><path d="M0.4 3.8H2.3V5.6H7.2V3.8H9.1V8.2Q9.1 9.1 8.2 9.1H1.3Q0.4 9.1 0.4 8.2z" fill="#94b8e6" stroke="#5a88cc" stroke-width="0.6"/><rect x="0.8" y="7.4" width="7.9" height="1.3" fill="#5a84c4"/></svg>
<div class="a" style="left:586px;top:31.2px;width:5.6px;height:6px;border:0.8px solid #3a3a3a;border-top-width:1.5px;border-radius:1.2px;background:#fafafa"></div>
<div class="a" style="left:179px;top:42px;width:409px;height:389px;background:#fff"></div>
<div class="a" style="left:0;top:0;width:588px;height:431px;overflow:hidden">
<div class="t" style="left:187.00px;top:51.93px;font-size:8.7px;font-weight:bold;color:#111">Handling UNRECOGNIZED Macros</div>
<div class="t" style="left:187.00px;top:69.12px;font-size:7.65px;color:#050505">Sometimes you may get syntax errors like <span style="letter-spacing:0.13px">UNRECOGNIZED_STATEMENT, UNRECOGNIZED_ACTION</span> etc.</div>
<div class="t" style="left:187.00px;top:78.22px;font-size:7.65px;color:#050505">when you use macros.</div>
<div class="t" style="left:187.00px;top:93.72px;font-size:7.65px;color:#050505">If the macros are declared in your project in one of the files which appear in the <b>Load Order View</b>, then it might be a</div>
<div class="t" style="left:187.00px;top:102.92px;font-size:7.65px;color:#050505">bug, please report it.</div>
<div class="t" style="left:187.00px;top:117.92px;font-size:7.65px;color:#050505">However, there are several cases in which you will have to use a work-around in order to get rid of such errors:</div>
<div class="a" style="left:202.35px;top:134.6px;width:3.3px;height:3.3px;border-radius:50%;background:#111"></div>
<div class="t" style="left:209.80px;top:133.02px;font-size:7.65px;color:#050505">you use macros defined in some eVC which is <b>encrypted</b>, for example <i>vr_ad</i>, hence we cannot parse the</div>
<div class="t" style="left:209.80px;top:142.22px;font-size:7.65px;color:#050505">macro definitions and detect matches</div>
<div class="a" style="left:202.35px;top:155.7px;width:3.3px;height:3.3px;border-radius:50%;background:#111"></div>
<div class="t" style="left:209.80px;top:154.12px;font-size:7.65px;color:#050505">you use undocumented constructs like <i>keep for</i>, <i>report</i>, <i>display</i></div>
<div class="t" style="left:187.00px;top:169.52px;font-size:7.65px;color:#050505">Our recommendation is:</div>
<div class="t" style="left:198.90px;top:184.82px;font-size:7.65px;color:#050505">1.</div>
<div class="t" style="left:209.80px;top:184.82px;font-size:7.65px;color:#050505">Create a separate file (<b>eclipse_macros.e</b>) in which you'll define dummy macros for unrecognized constructs.</div>
<div class="t" style="left:198.90px;top:197.22px;font-size:7.65px;color:#050505">2.</div>
<div class="t" style="left:209.80px;top:197.22px;font-size:7.65px;color:#050505">Put the dummy macros file in your project.</div>
<div class="t" style="left:198.90px;top:209.42px;font-size:7.65px;color:#050505">3.</div>
<div class="t" style="left:209.80px;top:209.42px;font-size:7.65px;color:#050505">Configure the <b>Project Top Files</b> so that the dummy macros file will be the first one.</div>
<div class="t" style="left:198.90px;top:221.42px;font-size:7.65px;color:#050505">4.</div>
<div class="t" style="left:209.80px;top:221.42px;font-size:7.65px;color:#050505">Rebuild.</div>
<div class="t" style="left:187.00px;top:236.22px;font-size:7.65px;color:#050505">Dummy macros might look like:</div>
<div class="a" style="left:188px;top:244px;width:1px;height:190px;background:#eeeeee"></div>
<div class="t" style="left:188.70px;top:247.27px;font-size:8.0px;font-family:'Liberation Mono',monospace;white-space:pre;letter-spacing:-0.15px"><span style="color:#20b020;font-weight:bold">&lt;'</span></div>
<div class="t" style="left:188.70px;top:267.05px;font-size:8.0px;font-family:'Liberation Mono',monospace;white-space:pre;letter-spacing:-0.15px"><span style="color:#8a8a8a;font-style:italic">// reg_def</span></div>
<div class="t" style="left:188.70px;top:276.94px;font-size:8.0px;font-family:'Liberation Mono',monospace;white-space:pre;letter-spacing:-0.15px"><span style="color:#980e0e;font-weight:bold">define</span><span style=""> </span><span style="color:#86521c">&lt;_edt_reg_def'statement&gt;</span></div>
<div class="t" style="left:188.70px;top:286.83px;font-size:8.0px;font-family:'Liberation Mono',monospace;white-space:pre;letter-spacing:-0.15px"><span style="color:#cc2ccc">"reg_def &lt;name&gt;[ &lt;name&gt; &lt;exp&gt;][ ]&lt;block&gt;"</span></div>
<div class="t" style="left:188.70px;top:296.72px;font-size:8.0px;font-family:'Liberation Mono',monospace;white-space:pre;letter-spacing:-0.15px"><span style="color:#980e0e;font-weight:bold">as</span><span style="color:#222"> {};</span></div>
<div class="t" style="left:188.70px;top:316.50px;font-size:8.0px;font-family:'Liberation Mono',monospace;white-space:pre;letter-spacing:-0.15px"><span style="color:#8a8a8a;font-style:italic">// reg_file</span></div>
<div class="t" style="left:188.70px;top:326.39px;font-size:8.0px;font-family:'Liberation Mono',monospace;white-space:pre;letter-spacing:-0.15px"><span style="color:#980e0e;font-weight:bold">define</span><span style=""> </span><span style="color:#86521c">&lt;_edt_reg_file'struct_member&gt;</span></div>
<div class="t" style="left:188.70px;top:336.28px;font-size:8.0px;font-family:'Liberation Mono',monospace;white-space:pre;letter-spacing:-0.15px"><span style="color:#cc2ccc">"reg_list &lt;name&gt;[ ]\[&lt;exp&gt;\][ ]of &lt;name&gt; at &lt;exp&gt;"</span></div>
<div class="t" style="left:188.70px;top:346.17px;font-size:8.0px;font-family:'Liberation Mono',monospace;white-space:pre;letter-spacing:-0.15px"><span style="color:#980e0e;font-weight:bold">as</span><span style="color:#222"> {};</span></div>
<div class="t" style="left:188.70px;top:365.95px;font-size:8.0px;font-family:'Liberation Mono',monospace;white-space:pre;letter-spacing:-0.15px"><span style="color:#8a8a8a;font-style:italic">// write_reg</span></div>
<div class="t" style="left:188.70px;top:375.84px;font-size:8.0px;font-family:'Liberation Mono',monospace;white-space:pre;letter-spacing:-0.15px"><span style="color:#980e0e;font-weight:bold">define</span><span style=""> </span><span style="color:#86521c">&lt;_edt_write_reg'action&gt;</span></div>
<div class="t" style="left:188.70px;top:385.73px;font-size:8.0px;font-family:'Liberation Mono',monospace;white-space:pre;letter-spacing:-0.15px"><span style="color:#cc2ccc">"write_reg[[ ]&lt;block&gt;] &lt;exp&gt;[[ ]&lt;block&gt;| val[ue] &lt;exp&gt;]"</span></div>
<div class="t" style="left:188.70px;top:395.62px;font-size:8.0px;font-family:'Liberation Mono',monospace;white-space:pre;letter-spacing:-0.15px"><span style="color:#980e0e;font-weight:bold">as</span><span style="color:#222"> {};</span></div>
<div class="t" style="left:188.70px;top:415.40px;font-size:8.0px;font-family:'Liberation Mono',monospace;white-space:pre;letter-spacing:-0.15px"><span style="color:#8a8a8a;font-style:italic">// read_reg</span></div>
<div class="t" style="left:188.70px;top:425.29px;font-size:8.0px;font-family:'Liberation Mono',monospace;white-space:pre;letter-spacing:-0.15px"><span style="color:#980e0e;font-weight:bold">define</span><span style=""> </span><span style="color:#86521c">&lt;_edt_read_reg'action&gt;</span></div>
</div>
<div class="a" style="left:588px;top:42px;width:10.5px;height:389px;background:#d6d5d3;border-left:0.9px solid #a0a0a0"></div>
<div class="a" style="left:597.6px;top:42px;width:1px;height:389px;background:#dcdcdc"></div>
<div class="a" style="left:588px;top:61.2px;width:8.9px;height:285.6px;background:linear-gradient(90deg,#acacac,#b6b6b6 50%,#c2c2c2);border-left:0.9px solid #8e8e8e;border-bottom:0.8px solid #909090"></div>
<div class="a" style="left:591px;top:200.8px;width:3.4px;height:5px;background:repeating-linear-gradient(#7a7a7a 0 0.9px,transparent 0.9px 2px)"></div>
<div class="a" style="left:588.4px;top:42.4px;width:8.3px;height:8.2px;background:linear-gradient(#fcfcfc,#efefef);border:1px solid #b4b4b4;border-radius:1.3px"></div>
<svg style="left:590.3px;top:45.3px" width="4.5" height="3" viewBox="0 0 4.5 3"><path d="M0.3 2.5L2.25 0.6 4.2 2.5" fill="none" stroke="#303030" stroke-width="1.2"/></svg>
<div class="a" style="left:588.4px;top:422.4px;width:8.3px;height:8.3px;background:linear-gradient(#fcfcfc,#efefef);border:1px solid #b4b4b4;border-radius:1.3px"></div>
<svg style="left:590.3px;top:425.3px" width="4.5" height="3" viewBox="0 0 4.5 3"><path d="M0.3 0.5L2.25 2.4 4.2 0.5" fill="none" stroke="#303030" stroke-width="1.2"/></svg></body></html>
